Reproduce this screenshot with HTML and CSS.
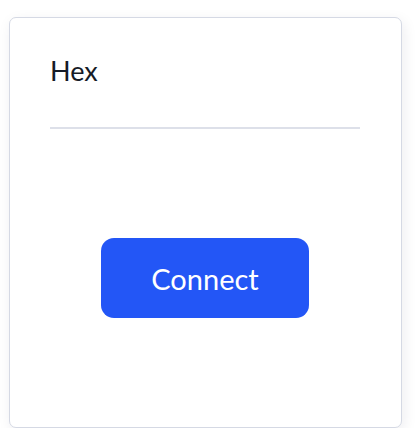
FILE: index.html
```html
<!DOCTYPE html>
<html>
<head>
<meta charset="utf-8">
<link rel="stylesheet" href="styles.css">
</head>
<body>
<div class="card">
  <div class="field">
    <label class="label" for="hex">Hex</label>
    <input class="input" id="hex" type="text">
  </div>
  <div class="actions">
    <button class="btn">Connect</button>
  </div>
</div>
</body>
</html>
```
FILE: styles.css
```css
html, body {
  margin: 0;
  padding: 0;
  background: #ffffff;
}
body {
  font-family: "Lato", "Noto Sans", sans-serif;
  color: #161b26;
}
.card {
  box-sizing: border-box;
  margin: 17px 0 0 9px;
  width: 393px;
  height: 411px;
  border: 1.5px solid #d5d9e4;
  border-radius: 7px;
  background: #fff;
  box-shadow: 2px 4px 14px rgba(20, 30, 60, 0.08);
  padding: 35px 41px 0 40px;
}
.field {
  display: flex;
  flex-direction: column;
}
.label {
  font-size: 27px;
  line-height: 36px;
}
.input {
  border: none;
  border-bottom: 2px solid #dde0e9;
  height: 38px;
  padding: 0;
  margin: 0;
  outline: none;
}
.actions {
  display: flex;
  justify-content: center;
  padding-top: 109px;
}
.btn {
  width: 208px;
  height: 80px;
  border: none;
  border-radius: 13px;
  background: #2356f6;
  color: #fff;
  font-family: "Lato", "Noto Sans", sans-serif;
  font-size: 29px;
  padding: 0;
}
```
